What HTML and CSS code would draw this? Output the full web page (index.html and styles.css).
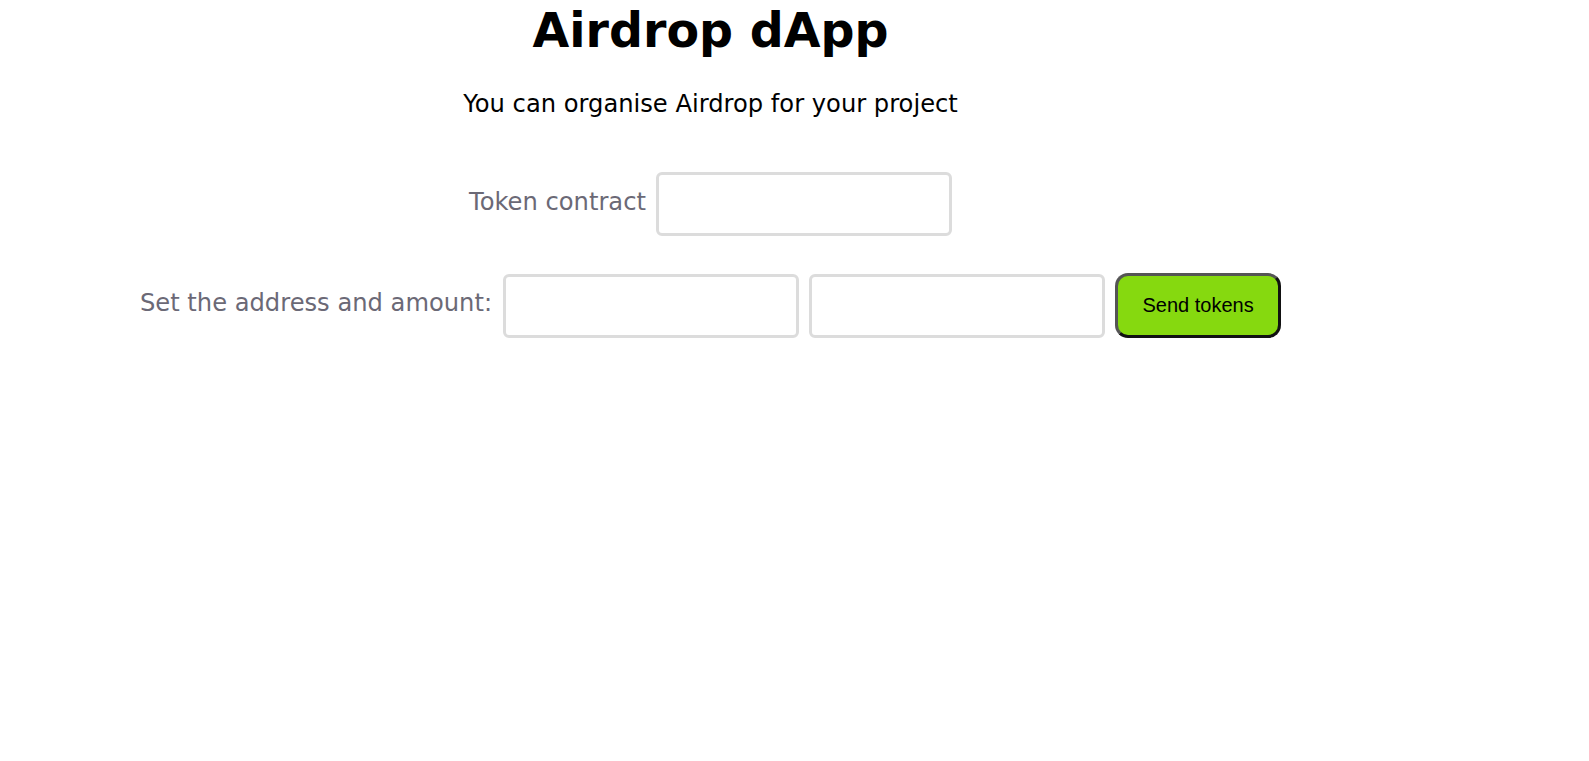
FILE: index.html
```html
<!DOCTYPE html>
<html lang="en">
<head>
<meta charset="utf-8">
<title>Airdrop dApp</title>
<link rel="stylesheet" href="styles.css">
</head>
<body>
<div class="app">
  <h1 class="title">Airdrop dApp</h1>
  <p class="subtitle">You can organise Airdrop for your project</p>
  <div class="row row-token">
    <label class="label" for="token">Token contract</label>
    <input class="field" id="token" type="text">
  </div>
  <div class="row row-send">
    <label class="label" for="addr">Set the address and amount:</label>
    <input class="field" id="addr" type="text">
    <input class="field" id="amount" type="text">
    <button class="send" type="button">Send tokens</button>
  </div>
</div>
</body>
</html>
```

FILE: styles.css
```css
html, body {
  margin: 0;
  padding: 0;
  background: #ffffff;
}

.app {
  width: 1421px;
  font-family: "DejaVu Sans", Verdana, sans-serif;
  color: #000;
  text-align: center;
}

.title {
  margin: 3px 0 0;
  font-size: 47.5px;
  line-height: 56px;
  font-weight: bold;
}

.subtitle {
  margin: 31px 0 0;
  font-size: 24.2px;
  line-height: 28px;
}

.row {
  display: flex;
  justify-content: center;
  align-items: center;
}

.row-token {
  margin-top: 54px;
  gap: 10px;
}

.row-send {
  margin-top: 37px;
  gap: 10px;
}

.row-send .label {
  margin-right: 1px;
}

.label {
  padding-bottom: 5px;
  font-size: 24.2px;
  color: #6b6976;
}

.field {
  box-sizing: border-box;
  width: 296px;
  height: 64px;
  margin: 0;
  padding: 0 10px;
  border: 3px solid #dcdcdc;
  border-radius: 6px;
  background: #fff;
  font-size: 20px;
  outline: none;
}

.send {
  box-sizing: border-box;
  width: 166px;
  height: 65px;
  margin: 0;
  padding: 0;
  border: 3px solid;
  border-color: #555555 #111111 #111111 #555555;
  border-radius: 13px;
  background: #86d90f;
  color: #000;
  font-family: "Liberation Sans", Arial, sans-serif;
  font-size: 20px;
  cursor: pointer;
}
```
